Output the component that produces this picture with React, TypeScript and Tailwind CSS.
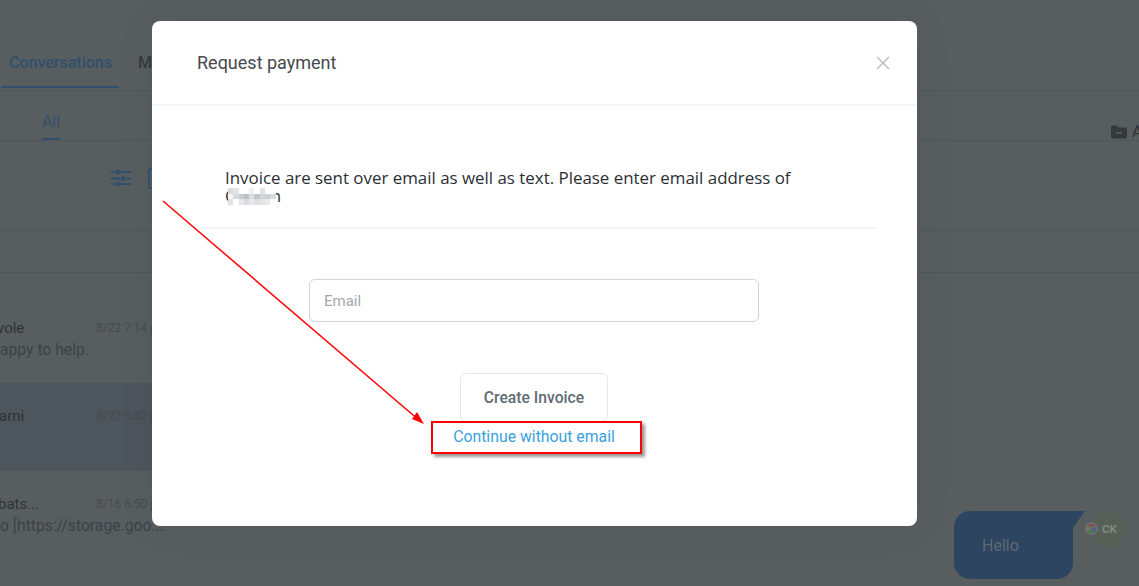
import React from "react";

const mosaic = [
  "bg-[#d8dadc]", "bg-[#e4e5e7]", "bg-white", "bg-white", "bg-[#f0f0f2]", "bg-white", "bg-[#e2e2e6]", "bg-white", "bg-white",
  "bg-[#f4f6f8]", "bg-[#d9dbdd]", "bg-[#c9cbcd]", "bg-[#bfc0c2]", "bg-[#dcdde0]", "bg-[#c4c5c9]", "bg-[#d4d5d9]", "bg-[#cfd0d2]", "bg-[#d8dadc]",
  "bg-[#e0e2e4]", "bg-white", "bg-[#e6e7e9]", "bg-[#dadbdd]", "bg-[#e8e8ec]", "bg-[#dfdfe3]", "bg-[#e4e4e8]", "bg-[#e8e8ea]", "bg-white",
];

function Row({ name, nameClass, time, msg, active }: { name: string; nameClass: string; time?: string; msg?: string; active?: boolean }) {
  return (
    <div className={`h-[88px] pt-[23px] ${active ? "bg-[#4e565d]" : ""}`}>
      <div className="flex h-[20px] items-center">
        <span className={`${nameClass} text-[15px] whitespace-nowrap text-[#303336]`}>{name}</span>
        {time && <span className="text-[12px] whitespace-nowrap text-[#474b4e]">{time}</span>}
      </div>
      {msg && <div className="mt-[1px] text-[15.7px] leading-[22px] whitespace-nowrap text-[#3c4348]">{msg}</div>}
    </div>
  );
}

export default function App() {
  return (
    <div className="relative h-[586px] w-[1139px] overflow-hidden bg-[#585d5f] font-['Roboto',sans-serif]">
      {/* page behind the dialog */}
      <div className="flex h-[91px] items-start border-b border-[#515658] pl-[1px] pt-[41px]">
        <div className="flex h-[47px] w-[118px] items-start justify-center border-b-2 border-[#31506d] pt-[12px] pl-[1px] text-[16px] leading-[20px] font-medium text-[#31506d]">
          Conversations
        </div>
        <div className="ml-[19px] pt-[12px] text-[16px] leading-[20px] font-medium text-[#35393c]">Messages</div>
      </div>
      <div className="flex h-[50px] border-b border-[#515658]">
        <div className="ml-[42px] flex h-[49px] w-[18px] items-start justify-center border-b-2 border-[#31506d] pt-[21px] text-[16px] leading-[20px] text-[#31506d]">
          All
        </div>
        <div className="ml-auto flex w-[28px] items-start overflow-hidden pt-[32px] text-[16px] leading-[18px] text-[#303336]">
          <svg className="mr-[5px] mt-[2px] shrink-0" width="16" height="14" viewBox="0 0 16 14">
            <path d="M0 2a1.5 1.5 0 0 1 1.5-1.5h4l2 2h7A1.5 1.5 0 0 1 16 4v8a1.5 1.5 0 0 1-1.5 1.5h-13A1.5 1.5 0 0 1 0 12Z" fill="#33393d" />
            <rect x="5" y="7" width="6" height="1.6" fill="#585d5f" />
          </svg>
          <span>All</span>
        </div>
      </div>
      <div className="flex h-[90px] items-start border-b border-[#515658] pl-[110px] pt-[27px]">
        <svg width="22" height="20" viewBox="0 0 22 20" fill="none" stroke="#31506d" strokeWidth="2">
          <path d="M1 4H4M10 4H21M1 10.5H10M16 10.5H21M1 16H4M10 16H21" />
          <circle cx="7.5" cy="4" r="2.5" fill="#31506d" stroke="none" />
          <circle cx="13" cy="10.5" r="2.5" fill="#31506d" stroke="none" />
          <circle cx="7.5" cy="16" r="2.5" fill="#31506d" stroke="none" />
        </svg>
        <div className="ml-[16px] h-[21px] w-[20px] rounded-[2px] border-2 border-[#31506d]" />
      </div>
      <div className="h-[42px] border-b border-[#515658]" />
      <div className="w-[300px] pt-[22px]">
        <Row name="vole" nameClass="-ml-[3px] w-[99px]" time="8/22 7:14 pm" msg="appy to help." />
        <Row name="arni" nameClass="-ml-[1px] w-[97px]" time="8/22 5:52 pm" active />
        <Row name="bats..." nameClass="-ml-[2px] w-[98px]" time="8/16 6:50 pm" msg="o [https://storage.goo..." />
        <Row name="abbey" nameClass="w-[96px]" />
      </div>

      {/* dialog */}
      <div className="absolute left-[152px] top-[21px] flex h-[505px] w-[765px] flex-col rounded-[8px] bg-white shadow-[0_0_40px_rgba(0,0,0,0.06)]">
        <div className="flex h-[85px] items-center justify-between border-b-2 border-[#f3f6f9] pl-[45px] pr-[27px]">
          <span className="text-[18px] text-[#45494d]">Request payment</span>
          <svg width="14" height="14" viewBox="0 0 14 14" stroke="#b4babf" strokeWidth="1.4">
            <path d="M1 1L13 13M13 1L1 13" />
          </svg>
        </div>
        <div className="ml-[48px] mr-[40px] h-[123px] border-b-2 border-[#f3f6f9] pl-[25px] pt-[63px] font-['Open_Sans',sans-serif] text-[16.9px] leading-[18px] text-[#2b2f33]">
          Invoice are sent over email as well as text. Please enter email address of
          <br />
          <span className="relative inline-block h-[18px] w-[56px]">
            <span className="absolute left-0 top-0">C</span>
            <span className="absolute right-0 top-0">n</span>
            <span className="absolute left-[3px] top-[1px] grid grid-cols-[repeat(9,5.3px)] grid-rows-[repeat(3,5.5px)]">
              {mosaic.map((c, i) => (
                <span key={i} className={c} />
              ))}
            </span>
          </span>
        </div>
        <div className="mt-[50px] flex flex-col items-center pr-[1px]">
          <input
            readOnly
            placeholder="Email"
            className="h-[43px] w-[450px] rounded-[6px] border border-[#ced4da] px-[14px] text-[15px] placeholder:text-[#a3a8ae]"
          />
          <div className="mt-[51px] flex h-[49px] w-[148px] items-center justify-center rounded-[6px] border border-[#e2e8f0] text-[15.7px] font-medium text-[#5f6b75]">
            Create Invoice
          </div>
          <div className="mt-[1px] text-[15.8px] leading-[28px] text-[#3b9fe0]">Continue without email</div>
        </div>
      </div>

      {/* chat bubble */}
      <div className="absolute left-[954px] top-[511px] flex h-[68px] w-[119px] items-center rounded-[16px] rounded-tr-none bg-[#2d4560] pl-[28px] pt-[2px] text-[16px] text-[#5d6a74]">
        Hello
      </div>
      <svg className="absolute left-[1072px] top-[511px]" width="13" height="18" viewBox="0 0 13 18">
        <path d="M0 0H13L0 18Z" fill="#2d4560" />
      </svg>
      <div className="absolute left-[1090px] top-[511px] flex h-[36px] w-[36px] items-center justify-center rounded-full bg-[#566057] pl-[3px] pt-[1px] text-[11.5px] font-bold text-[#7d8a80]">
        CK
      </div>
      <div className="absolute left-[1085px] top-[522px] flex h-[13px] w-[13px] items-center justify-center rounded-full bg-[#6a6e70]">
        <svg width="9" height="9" viewBox="0 0 24 24" fill="none" strokeWidth="5">
          <path d="M20 6A11 11 0 0 0 4 6" stroke="#8a5048" />
          <path d="M4 6A11 11 0 0 0 4 18" stroke="#8a7a40" />
          <path d="M4 18A11 11 0 0 0 20 18" stroke="#44744e" />
          <path d="M20 18A11 11 0 0 0 23 12H12" stroke="#44609a" />
        </svg>
      </div>

      {/* annotation */}
      <svg className="pointer-events-none absolute left-0 top-0" width="1139" height="586" viewBox="0 0 1139 586">
        <line x1="163" y1="201" x2="420" y2="421" stroke="#ff0000" strokeWidth="1.5" />
        <path d="M424 424L412 419L417 412Z" fill="#ff0000" />
      </svg>
      <div className="absolute left-[431px] top-[421px] h-[33px] w-[211px] border-2 border-[#ff0000] shadow-[3px_3px_3px_rgba(0,0,0,0.4)]" />
    </div>
  );
}
